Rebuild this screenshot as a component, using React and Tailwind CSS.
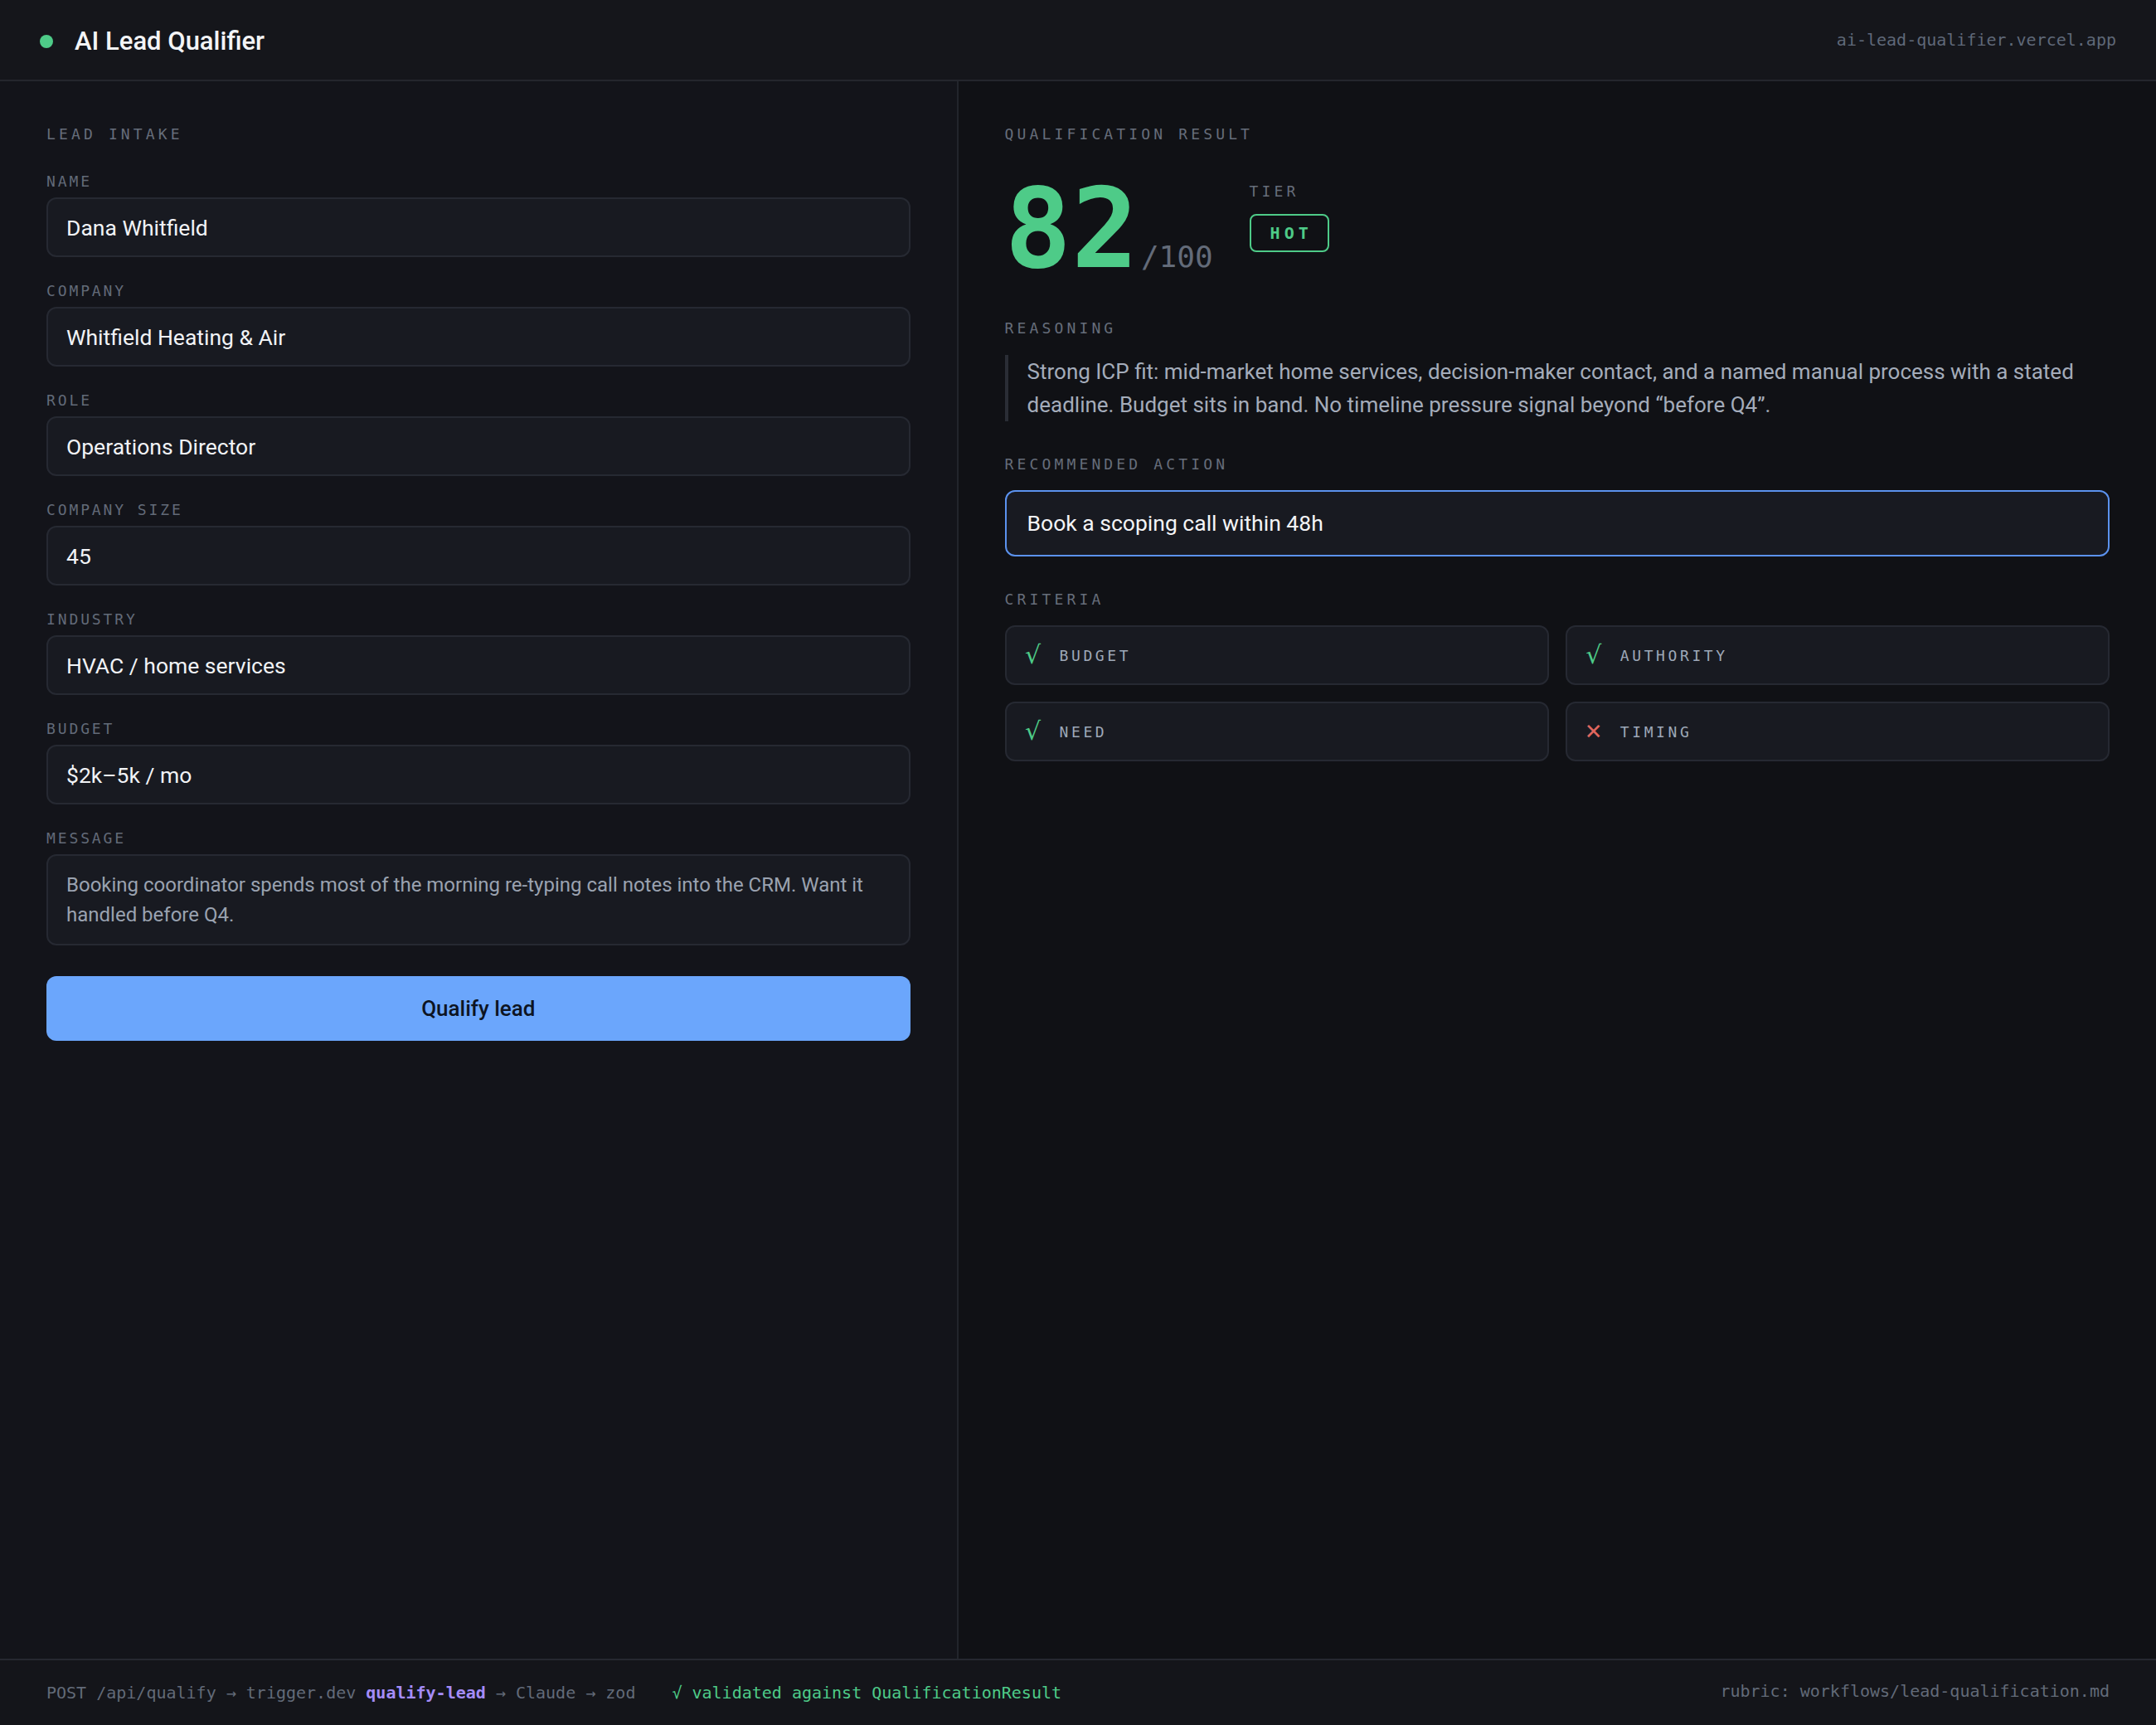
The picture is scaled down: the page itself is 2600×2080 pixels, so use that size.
import React from "react"

const mono = "font-['DejaVu_Sans_Mono',monospace]"

const fields = [
  { label: "NAME", value: "Dana Whitfield" },
  { label: "COMPANY", value: "Whitfield Heating & Air" },
  { label: "ROLE", value: "Operations Director" },
  { label: "COMPANY SIZE", value: "45" },
  { label: "INDUSTRY", value: "HVAC / home services" },
  { label: "BUDGET", value: "$2k–5k / mo" },
]

const criteria = [
  { name: "BUDGET", ok: true },
  { name: "AUTHORITY", ok: true },
  { name: "NEED", ok: true },
  { name: "TIMING", ok: false },
]

const SectionTitle = ({ children }) => (
  <div className={`${mono} text-[18px] leading-[24px] tracking-[0.23em] text-[#666d7a]`}>
    {children}
  </div>
)

const FieldLabel = ({ children }) => (
  <div className={`${mono} text-[18px] leading-[24px] tracking-[0.16em] text-[#626a78]`}>
    {children}
  </div>
)

const Field = ({ label, value }) => (
  <div className="flex flex-col">
    <FieldLabel>{label}</FieldLabel>
    <input
      readOnly
      value={value}
      className="mt-[7px] h-[72px] w-full rounded-[12px] border-2 border-[#262932] bg-[#181a21] px-[22px] text-[26.5px] text-[#f1f3f6] outline-none"
    />
  </div>
)

export default function App() {
  return (
    <div className="flex h-[2080px] w-[2600px] flex-col bg-[#111216] font-['Roboto',sans-serif]">
      <header className="flex h-[98px] shrink-0 items-center justify-between border-b-2 border-[#24262d] bg-[#15161b] px-[48px]">
        <div className="flex items-center gap-[26px] pt-[4px]">
          <span className="h-[16px] w-[16px] rounded-full bg-[#4ecb88]" />
          <h1 className="text-[31px] font-medium text-[#f3f4f6]">AI Lead Qualifier</h1>
        </div>
        <div className={`${mono} text-[20px] text-[#5f6878]`}>ai-lead-qualifier.vercel.app</div>
      </header>

      <main className="grid flex-1 grid-cols-[1fr_1.25fr]">
        <section className="border-r-2 border-[#22252c] bg-[#13141a] px-[56px] pt-[52px]">
          <SectionTitle>LEAD INTAKE</SectionTitle>
          <div className="mt-[33px] flex flex-col gap-[29px]">
            {fields.map((f) => (
              <Field key={f.label} label={f.label} value={f.value} />
            ))}
            <div className="flex flex-col">
              <FieldLabel>MESSAGE</FieldLabel>
              <div className="mt-[7px] rounded-[12px] border-2 border-[#262932] bg-[#181a21] px-[22px] py-[17px] text-[24px] leading-[36px] text-[#9aa2b0]">
                Booking coordinator spends most of the morning re-typing call notes into the CRM. Want it handled before Q4.
              </div>
            </div>
          </div>
          <button className="mt-[37px] h-[78px] w-full rounded-[12px] bg-[#6ba6fc] text-[26px] font-medium text-[#0d1422]">
            Qualify lead
          </button>
        </section>

        <section className="bg-[#101115] px-[56px] pt-[52px]">
          <SectionTitle>QUALIFICATION RESULT</SectionTitle>

          <div className="mt-[35px] flex items-start">
            <div className="flex items-baseline">
              <span className={`${mono} text-[134px] font-bold leading-none text-[#4ecb88]`}>82</span>
              <span className={`${mono} ml-[3px] text-[36px] leading-none text-[#636b79]`}>/100</span>
            </div>
            <div className="ml-[44px] mt-[10px] flex flex-col items-start">
              <div className={`${mono} text-[18px] leading-[24px] tracking-[0.23em] text-[#666d7a]`}>TIER</div>
              <div className={`${mono} mt-[15px] flex h-[46px] items-center rounded-[8px] border-2 border-[#4ecb88] pl-[23px] pr-[18px] text-[20px] font-bold tracking-[0.25em] text-[#4ecb88]`}>
                HOT
              </div>
            </div>
          </div>

          <div className="mt-[41px]">
            <SectionTitle>REASONING</SectionTitle>
          </div>
          <div className="mt-[20px] border-l-4 border-[#2a2d35] pl-[23px] text-[26px] leading-[40px] text-[#a4acba]">
            Strong ICP fit: mid-market home services, decision-maker contact, and a named manual process with a stated deadline. Budget sits in band. No timeline pressure signal beyond “before Q4”.
          </div>

          <div className="mt-[40px]">
            <SectionTitle>RECOMMENDED ACTION</SectionTitle>
          </div>
          <div className="mt-[19px] flex h-[80px] items-center rounded-[12px] border-2 border-[#5b92ee] bg-[#181a21] px-[25px] text-[26.5px] text-[#f3f4f6]">
            Book a scoping call within 48h
          </div>

          <div className="mt-[40px]">
            <SectionTitle>CRITERIA</SectionTitle>
          </div>
          <div className="mt-[19px] grid grid-cols-2 gap-[20px]">
            {criteria.map((c) => (
              <div
                key={c.name}
                className="flex h-[72px] items-center rounded-[12px] border-2 border-[#262932] bg-[#181a21] px-[20px]"
              >
                <span
                  className={`flex w-[24px] justify-center font-['DejaVu_Sans',sans-serif] leading-none ${c.ok ? "text-[30px] text-[#4ecb88]" : "text-[26px] text-[#e0675f]"}`}
                >
                  {c.ok ? "√" : "✕"}
                </span>
                <span className={`${mono} ml-[20px] text-[18px] tracking-[0.2em] text-[#9ea8b8]`}>{c.name}</span>
              </div>
            ))}
          </div>
        </section>
      </main>

      <footer className={`${mono} flex h-[80px] shrink-0 items-center justify-between border-t-2 border-[#262830] bg-[#14151a] px-[56px] text-[20px] text-[#626a78]`}>
        <div className="flex items-center">
          <span>
            POST /api/qualify → trigger.dev <span className="font-bold text-[#a48cf8]">qualify-lead</span> → Claude → zod
          </span>
          <span className="ml-[44px] text-[#4ecb88]">
            <span className="mr-[12px]">√</span>validated against QualificationResult
          </span>
        </div>
        <div className="-mt-[4px]">rubric: workflows/lead-qualification.md</div>
      </footer>
    </div>
  )
}
